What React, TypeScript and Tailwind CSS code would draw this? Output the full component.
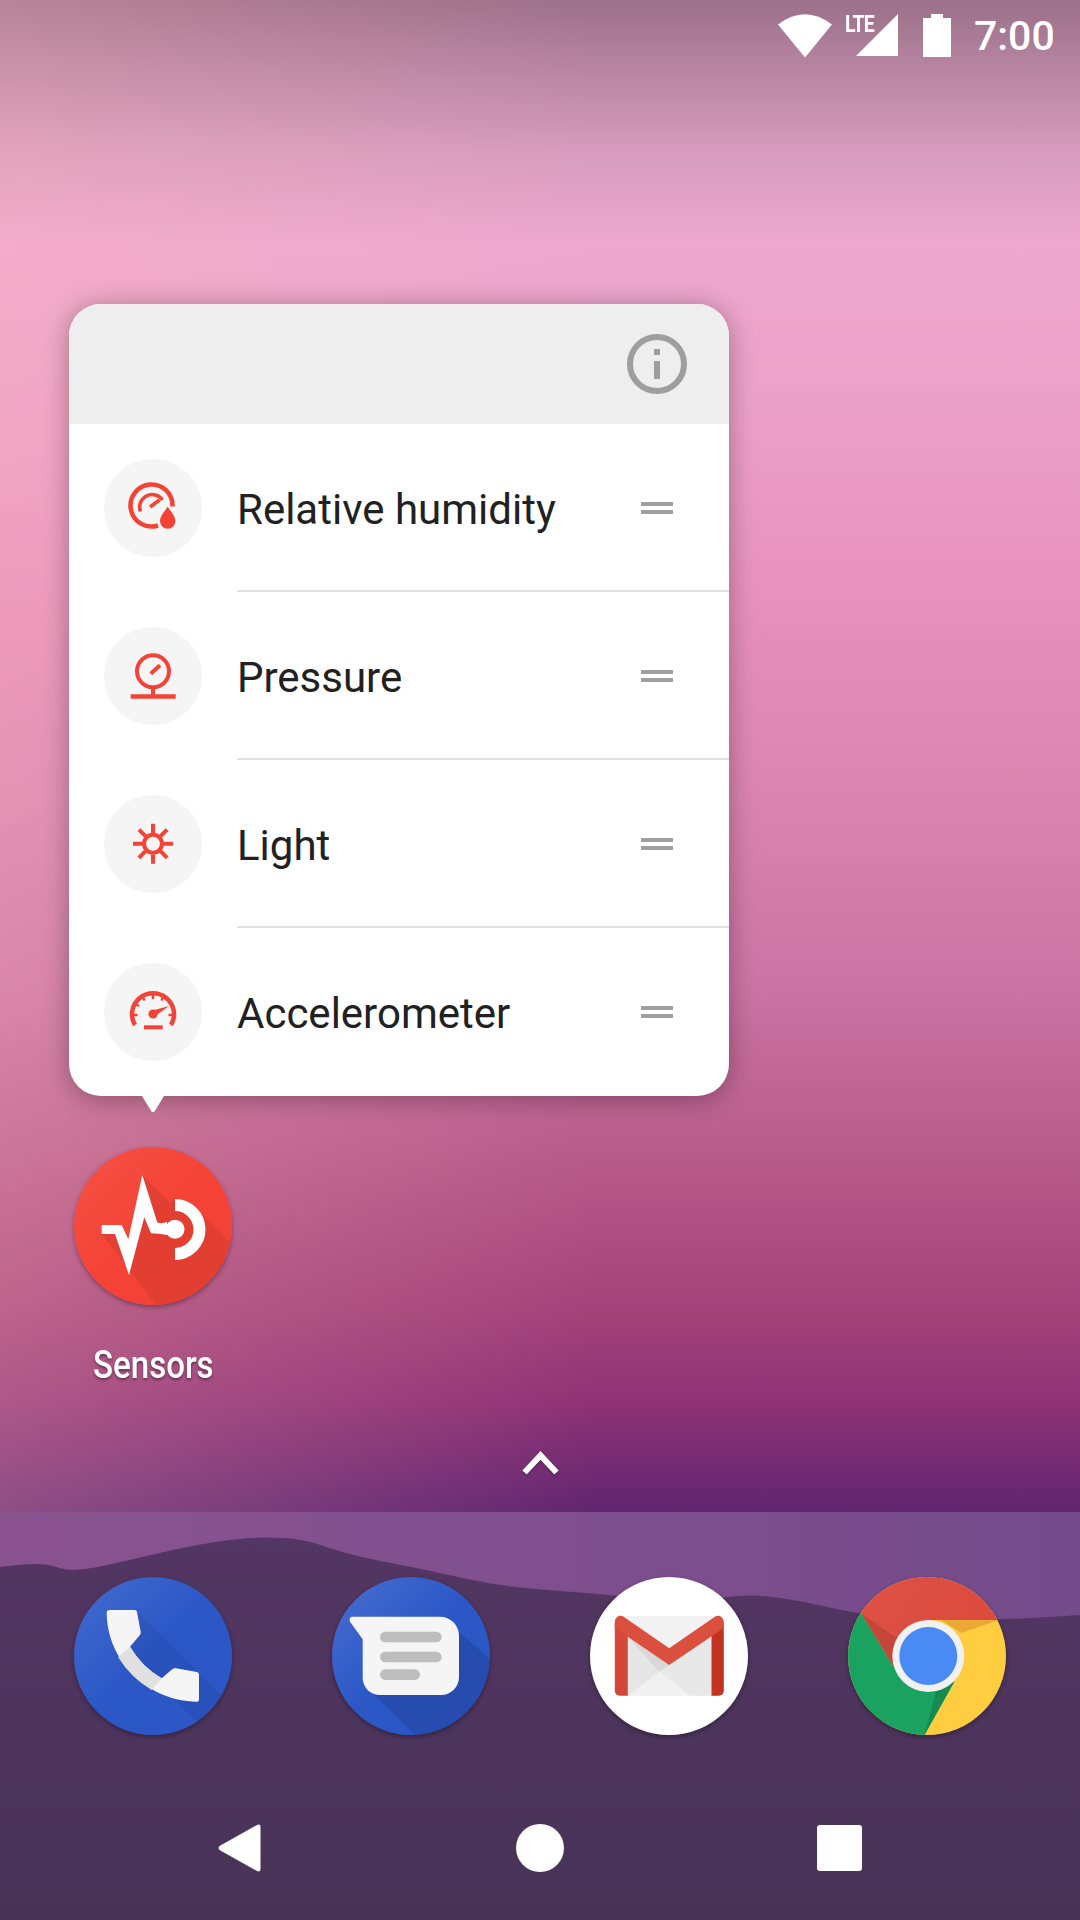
import type { ReactNode } from "react";

const RED = "#f44336";

// hills behind the dock, page coords minus the dock's top
const ridge = [
  [0, 55], [41, 49], [72, 61], [138, 46], [190, 34], [234, 27], [265, 25], [303, 27], [335, 38], [365, 46],
  [427, 58], [503, 75], [592, 81], [689, 91], [744, 82], [792, 87], [854, 101], [900, 106], [1000, 108], [1080, 103],
];

function ridgePath() {
  let d = `M${ridge[0][0]} ${ridge[0][1]}`;
  for (let i = 1; i < ridge.length - 1; i++) {
    const midX = (ridge[i][0] + ridge[i + 1][0]) / 2;
    const midY = (ridge[i][1] + ridge[i + 1][1]) / 2;
    d += `Q${ridge[i][0]} ${ridge[i][1]} ${midX} ${midY}`;
  }
  return d + "L1080 103V408H0Z";
}

const HumidityIcon = () => (
  <svg width="98" height="98" viewBox="0 0 98 98" fill="none">
    <path d="M54 66.5A21 21 0 1 1 68.5 47.5" stroke={RED} strokeWidth="4.5" />
    <path d="M36.5 52.5A12.5 12.5 0 0 1 58.5 41" stroke={RED} strokeWidth="3.6" />
    <path d="M46 48L55.5 41" stroke={RED} strokeWidth="3.6" />
    <path d="M63.7 47.5C66 52 71.4 56.5 71.4 62A7.7 7.7 0 0 1 56 62C56 56.5 61.4 52 63.7 47.5Z" fill={RED} />
  </svg>
);

const PressureIcon = () => (
  <svg width="98" height="98" viewBox="0 0 98 98" fill="none" stroke={RED}>
    <circle cx="49" cy="44.3" r="16" strokeWidth="4" />
    <path d="M46.7 46.7L56 38.3" strokeWidth="4" />
    <path d="M49 60V68" strokeWidth="4" />
    <path d="M26.7 69.5H71.7" strokeWidth="4.5" />
  </svg>
);

const LightIcon = () => (
  <svg width="98" height="98" viewBox="0 0 98 98" fill="none" stroke={RED} strokeWidth="4">
    <circle cx="49" cy="48.7" r="9" />
    <path d="M49 28.7V38M49 59.4V68.7M29 48.7H38.3M59.7 48.7H69M34.9 34.6L41.5 41.2M56.5 56.2L63.1 62.8M63.1 34.6L56.5 41.2M41.5 56.2L34.9 62.8" />
  </svg>
);

const AccelIcon = () => (
  <svg width="98" height="98" viewBox="0 0 98 98" fill="none" stroke={RED}>
    <path d="M31 62A21 21 0 1 1 67 62" strokeWidth="4.5" />
    <path d="M49 31V36M38.5 33.5L40.5 37.5M59.5 33.5L57.5 37.5M31 41L35 43M29.5 52H33.5M68.5 52H64.5" strokeWidth="2.4" />
    <circle cx="49" cy="51" r="4.6" fill={RED} stroke="none" />
    <path d="M47 48L65 43L50 54Z" fill={RED} stroke="none" />
    <path d="M40 64.3H58.7" strokeWidth="4" />
  </svg>
);

const DragHandle = () => (
  <div className="flex flex-col gap-[4px] mr-[56px] mt-[2px]">
    <div className="w-[32px] h-[4px] bg-[#9e9e9e]" />
    <div className="w-[32px] h-[4px] bg-[#9e9e9e]" />
  </div>
);

const sensors = [
  { name: "Relative humidity", icon: <HumidityIcon /> },
  { name: "Pressure", icon: <PressureIcon /> },
  { name: "Light", icon: <LightIcon /> },
  { name: "Accelerometer", icon: <AccelIcon /> },
];

const SensorsLogo = () => (
  <svg width="158" height="158" viewBox="0 0 158 158">
    <defs>
      <clipPath id="sensorClip"><circle cx="79" cy="79" r="79" /></clipPath>
      <linearGradient id="sensorShine" x1="0" y1="0" x2="1" y2="1">
        <stop offset="0" stopColor="#fff" stopOpacity="0.08" />
        <stop offset="0.5" stopColor="#fff" stopOpacity="0" />
      </linearGradient>
    </defs>
    <g clipPath="url(#sensorClip)">
      <rect width="158" height="158" fill={RED} />
      <rect width="158" height="158" fill="url(#sensorShine)" />
      <path d="M68.3 28L96 56L101 52L116 55L158 97V158H82L27.7 87H47.7L54.3 92.3Z" fill="#000" fillOpacity="0.07" />
    </g>
    <path d="M27.7 78H47.7L54.3 92.3L68.3 28L83.3 75.5Q88 77 93 75V88Q85 86.5 77 86.3L70.3 70.3L55 128L41 87H27.7Z" fill="#fff" />
    <circle cx="101" cy="82.3" r="9.5" fill="#fff" />
    <path d="M101 58A24.5 24.5 0 0 1 101 107" fill="none" stroke="#fff" strokeWidth="12" />
  </svg>
);

const PhoneLogo = () => (
  <svg width="158" height="158" viewBox="0 0 158 158">
    <defs>
      <clipPath id="phoneClip"><circle cx="79" cy="79" r="79" /></clipPath>
      <linearGradient id="blueShine" x1="0" y1="0" x2="1" y2="1">
        <stop offset="0" stopColor="#fff" stopOpacity="0.12" />
        <stop offset="0.5" stopColor="#fff" stopOpacity="0" />
      </linearGradient>
    </defs>
    <g clipPath="url(#phoneClip)">
      <rect width="158" height="158" fill="#2b57c7" />
      <rect width="158" height="158" fill="url(#blueShine)" />
      <path d="M63 34L158 128V158H136L90 112L56 70Z" fill="#000" fillOpacity="0.06" />
    </g>
    <path d="M35 33H60.5Q62.7 33 63 35L66.7 55Q67 57 65.5 58.5L56 69.7Q68 90 87.7 101.3L98.5 92Q100 91 102 91.3L123 95Q125 95.5 125 97.5V122.5Q125 125 122.5 124.7C75 124 33 85 32.7 35.5Q32.7 33 35 33Z" fill="#f5f5f5" />
    <path d="M56 69.7Q68 90 87.7 101.3L77.7 113Q57 101 44 80Z" fill="#e0e0e0" />
  </svg>
);

const MessagesLogo = () => (
  <svg width="158" height="158" viewBox="0 0 158 158">
    <defs>
      <clipPath id="msgClip"><circle cx="79" cy="79" r="79" /></clipPath>
      <linearGradient id="msgShine" x1="0" y1="0" x2="1" y2="1">
        <stop offset="0" stopColor="#fff" stopOpacity="0.14" />
        <stop offset="0.5" stopColor="#fff" stopOpacity="0" />
      </linearGradient>
    </defs>
    <g clipPath="url(#msgClip)">
      <rect width="158" height="158" fill="#2b57c7" />
      <rect width="158" height="158" fill="url(#msgShine)" />
      <path d="M124 52L158 82V158H83L36 112Z" fill="#000" fillOpacity="0.12" />
    </g>
    <path d="M20 39.7H108A19 19 0 0 1 127 58.7V100A18 18 0 0 1 109 118H48A17 17 0 0 1 30.7 101V62.3L18 44.7Q16.5 40 20 39.7Z" fill="#f5f5f5" />
    <rect x="48" y="54.7" width="61.7" height="10.6" rx="5.3" fill="#bdbdbd" />
    <rect x="48" y="74.7" width="61.7" height="10.6" rx="5.3" fill="#bdbdbd" />
    <rect x="48" y="92.3" width="40" height="10.6" rx="5.3" fill="#bdbdbd" />
  </svg>
);

const GmailLogo = () => (
  <svg width="158" height="158" viewBox="0 0 158 158">
    <circle cx="79" cy="79" r="79" fill="#fff" />
    <rect x="30" y="39" width="98" height="79.7" fill="#f2f2f2" />
    <path d="M37.8 52L79.2 88L70 95L37.8 118.7Z" fill="#e6e6e6" />
    <path d="M121.5 52L79.2 88L70 95L100 118.7H121.5Z" fill="#e8e8e8" />
    <path d="M37.8 118.7L69 94.5L92 118.7Z" fill="#f0f0f0" />
    <path d="M37.8 60L79.2 88L69 94.5Z" fill="#d8d8d8" />
    <path d="M24.8 46V113.7A5 5 0 0 0 29.8 118.7H37.8V46Z" fill="#d34836" />
    <path d="M133.8 46V113.7A5 5 0 0 1 128.8 118.7H121.5V46Z" fill="#c23321" />
    <path d="M24.8 45C25 40 30 37 34 40L79.2 71.3L124.5 40C128.5 37 133.6 40 133.8 45V51L79.2 88L24.8 51Z" fill="#db4f3f" />
  </svg>
);

const ChromeLogo = () => (
  <svg width="158" height="158" viewBox="0 0 158 158">
    <defs>
      <clipPath id="chromeClip"><circle cx="79" cy="79" r="79" /></clipPath>
      <linearGradient id="chromeRed" x1="0" y1="0" x2="1" y2="0.4">
        <stop offset="0" stopColor="#de5246" />
        <stop offset="1" stopColor="#db4a3d" />
      </linearGradient>
    </defs>
    <g clipPath="url(#chromeClip)">
      <rect width="158" height="158" fill="#ffcd40" />
      <path d="M80 43H150.7L159 43V0H0V36.3H13L44.7 88L80 79Z" fill="url(#chromeRed)" />
      <path d="M13 36.3L44.7 88L80 79L106.3 104.7L76.3 158.5H0V36.3Z" fill="#1aa260" />
      <path d="M93 43H150.7L113 56Z" fill="#e9a932" />
      <path d="M13 36.3L44.7 88L50 62Z" fill="#c4473a" />
      <path d="M106.3 104.7L76.3 158L88 115Z" fill="#168a50" />
    </g>
    <circle cx="80.3" cy="79" r="36" fill="#f1f1f1" />
    <circle cx="80.3" cy="79" r="29" fill="#4a8af4" />
  </svg>
);

const AppIcon = ({ children }: { children: ReactNode }) => (
  <div className="w-[158px] h-[158px] rounded-full shadow-[0_2px_5px_rgba(0,0,0,0.35)]">{children}</div>
);

export default function App() {
  return (
    <div className="w-[1080px] h-[1920px] overflow-hidden relative flex flex-col font-['Roboto',sans-serif] bg-[linear-gradient(to_bottom,#9b7089_0px,#b3829f_60px,#d79cbd_152px,#eda8cf_245px,#eb9fc7_430px,#e78fbb_615px,#d984b0_800px,#cb74a3_986px,#b55988_1171px,#a24379_1310px,#8f3276_1402px,#612570_1512px)]">
      {/* left side of the wallpaper is a bit warmer */}
      <div className="absolute inset-0 bg-[linear-gradient(to_right,rgba(255,185,185,0.28),rgba(255,185,185,0)_55%)]" />

      {/* status bar */}
      <div className="relative h-[72px] flex items-center justify-end pr-[25px] text-white">
        <svg width="54" height="44" viewBox="0 0 54 44" fill="#fff" className="mr-[13px] mt-[-1px]">
          <path d="M0 10.5Q27 -10 54 10.5L27 43.5Z" />
        </svg>
        <div className="relative w-[53px] h-[43px] mr-[25px] mt-[-1px]">
          <svg width="53" height="43" viewBox="0 0 53 43" fill="#fff" className="absolute inset-0">
            <path d="M53 0V42H11Z" />
          </svg>
          <span className="absolute left-0 top-[-1px] text-[23px] font-bold leading-[24px] tracking-[-1px] scale-x-[0.85] origin-left">LTE</span>
        </div>
        <svg width="28" height="43" viewBox="0 0 28 43" fill="#fff" className="mr-[23px] mt-[-1px]">
          <path d="M8 0H20V4H28V43H0V4H8Z" />
        </svg>
        <span className="text-[41px] font-medium leading-none w-[81px]">7:00</span>
      </div>

      {/* popup card */}
      <div className="relative ml-[69px] mt-[232px] w-[660px] h-[792px] rounded-[32px] bg-white shadow-[0_3px_26px_rgba(0,0,0,0.32)]">
        <div className="h-[120px] rounded-t-[32px] bg-[#eeeeee] flex items-center justify-end pr-[42px]">
          <svg width="60" height="60" viewBox="0 0 60 60" className="mt-[-1px]">
            <circle cx="30" cy="30" r="27" fill="none" stroke="#9e9e9e" strokeWidth="6" />
            <rect x="27" y="15" width="6" height="6" fill="#9e9e9e" />
            <rect x="27" y="27" width="6" height="18" fill="#9e9e9e" />
          </svg>
        </div>
        {sensors.map((s, i) => (
          <div key={s.name} className="h-[168px] flex items-center pl-[35px]">
            <div className="w-[98px] h-[98px] shrink-0 rounded-full bg-[#f5f5f5]">{s.icon}</div>
            <div className={`ml-[35px] flex-1 h-full flex items-center border-b-2 ${i < sensors.length - 1 ? "border-[#e0e0e0]" : "border-transparent"}`}>
              <span className="flex-1 pt-[6px] text-[42px] leading-none text-[#212121]">{s.name}</span>
              <DragHandle />
            </div>
          </div>
        ))}
        {/* arrow under the card */}
        <svg width="24" height="17" viewBox="0 0 24 17" className="absolute left-[72px] top-[792px]">
          <path d="M1 0H23L13.5 15.5Q12 17 10.5 15.5Z" fill="#fff" />
        </svg>
      </div>

      {/* home screen icon */}
      <div className="relative ml-[74px] mt-[51px] w-[158px] flex flex-col items-center">
        <AppIcon><SensorsLogo /></AppIcon>
        <span className="mt-[38px] text-[38px] font-medium leading-[44px] text-white whitespace-nowrap scale-x-[0.87] [text-shadow:0_2px_3px_rgba(0,0,0,0.4)]">Sensors</span>
      </div>

      {/* all apps caret */}
      <div className="relative flex justify-center mt-[64px]">
        <svg width="37" height="24" viewBox="0 0 37 24" fill="none" className="drop-shadow-[0_1px_1px_rgba(0,0,0,0.4)]">
          <path d="M2.5 21.5L18.5 4.5L34.5 21.5" stroke="#fff" strokeWidth="6" />
        </svg>
      </div>

      {/* dock */}
      <div className="absolute left-0 right-0 bottom-0 h-[408px] flex flex-col bg-[linear-gradient(to_right,#8a5390,#744b8b)]">
        <svg width="1080" height="408" viewBox="0 0 1080 408" className="absolute inset-0">
          <defs>
            <linearGradient id="ridge" x1="0" y1="0" x2="0" y2="1">
              <stop offset="0" stopColor="#533663" />
              <stop offset="1" stopColor="#483357" />
            </linearGradient>
          </defs>
          <path d={ridgePath()} fill="url(#ridge)" />
        </svg>
        <div className="relative flex gap-[100px] pl-[74px] pt-[65px]">
          <AppIcon><PhoneLogo /></AppIcon>
          <AppIcon><MessagesLogo /></AppIcon>
          <AppIcon><GmailLogo /></AppIcon>
          <AppIcon><ChromeLogo /></AppIcon>
        </div>
        <div className="relative mt-[89px] flex items-center pl-[218px]">
          <svg width="43" height="48" viewBox="0 0 43 48" fill="#fff">
            <path d="M42.5 3V45Q42.5 48.5 39 47L1.5 26Q-0.5 24 1.5 22L39 1Q42.5 -0.5 42.5 3Z" />
          </svg>
          <div className="ml-[255px] w-[48px] h-[48px] rounded-full bg-white" />
          <div className="ml-[253px] w-[45px] h-[46px] rounded-[3px] bg-white" />
        </div>
      </div>
    </div>
  );
}
